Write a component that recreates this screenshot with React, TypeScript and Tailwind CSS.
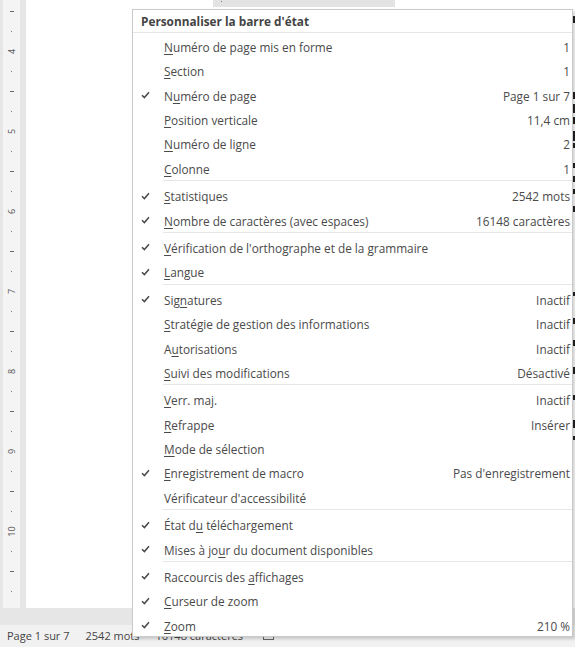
import React from "react";

type Item = {
  label: [string, string, string];
  value?: string;
  checked?: boolean;
  sepAfter?: boolean;
};

const items: Item[] = [
  { label: ["", "N", "uméro de page mis en forme"], value: "1" },
  { label: ["", "S", "ection"], value: "1" },
  { label: ["N", "u", "méro de page"], value: "Page 1 sur 7", checked: true },
  { label: ["", "P", "osition verticale"], value: "11,4 cm" },
  { label: ["", "N", "uméro de ligne"], value: "2" },
  { label: ["", "C", "olonne"], value: "1", sepAfter: true },
  { label: ["", "S", "tatistiques"], value: "2542 mots", checked: true },
  { label: ["", "N", "ombre de caractères (avec espaces)"], value: "16148 caractères", checked: true, sepAfter: true },
  { label: ["", "V", "érification de l'orthographe et de la grammaire"], checked: true },
  { label: ["", "L", "angue"], checked: true, sepAfter: true },
  { label: ["Sig", "n", "atures"], value: "Inactif", checked: true },
  { label: ["", "S", "tratégie de gestion des informations"], value: "Inactif" },
  { label: ["A", "u", "torisations"], value: "Inactif" },
  { label: ["", "S", "uivi des modifications"], value: "Désactivé", sepAfter: true },
  { label: ["", "V", "err. maj."], value: "Inactif" },
  { label: ["", "R", "efrappe"], value: "Insérer" },
  { label: ["", "M", "ode de sélection"] },
  { label: ["", "E", "nregistrement de macro"], value: "Pas d'enregistrement", checked: true },
  { label: ["Vérificateur d'accessibilité", "", ""], sepAfter: true },
  { label: ["État d", "u", " téléchargement"], checked: true },
  { label: ["Mises à jo", "u", "r du document disponibles"], checked: true, sepAfter: true },
  { label: ["Raccourcis des ", "a", "ffichages"], checked: true },
  { label: ["", "C", "urseur de zoom"], checked: true },
  { label: ["", "Z", "oom"], value: "210 %", checked: true },
];

const ruler: string[] = [];
["4", "5", "6", "7", "8", "9", "10"].forEach((n) => {
  ruler.push("-", ".", n, ".");
});
ruler.push("-", ".");

// bits of the document text peeking out on the right of the menu
const marks = [
  { top: 16, h: 7 },
  { top: 92, h: 7 },
  { top: 104, h: 9 },
  { top: 117, h: 7 },
  { top: 131, h: 10 },
  { top: 143, h: 5 },
  { top: 163, h: 5 },
  { top: 176, h: 6 },
  { top: 189, h: 5 },
  { top: 206, h: 6 },
  { top: 292, h: 4 },
  { top: 318, h: 6 },
  { top: 340, h: 6 },
  { top: 367, h: 7 },
  { top: 395, h: 5 },
  { top: 420, h: 8 },
  { top: 436, h: 4 },
];

function Check() {
  return (
    <svg width="9" height="8" viewBox="0 0 9 8" fill="none">
      <path d="M1 4.2 L3.4 6.6 L8 1.2" stroke="#4a4a4a" strokeWidth="1.5" />
    </svg>
  );
}

export default function App() {
  return (
    <div
      className="relative w-[575px] h-[647px] overflow-hidden bg-[#e6e6e6] text-[#444]"
      style={{ fontFamily: '"Open Sans", "Noto Sans", sans-serif' }}
    >
      <div className="flex h-[608px]">
        <div className="w-[3px]" />
        <div className="w-[17px] bg-[#f4f4f4] flex flex-col pt-px">
          {ruler.map((r, i) => (
            <div key={i} className="h-5 flex items-center justify-center">
              {r === "-" ? (
                <div className="w-[4px] h-px bg-[#666]" />
              ) : r === "." ? (
                <div className="w-px h-px bg-[#777]" />
              ) : (
                <span className="-rotate-90 text-[9px] leading-none text-[#555]">{r}</span>
              )}
            </div>
          ))}
        </div>
        <div className="w-[6px]" />
        <div className="flex-1 bg-white relative">
          <div className="absolute left-[187px] top-0 w-[182px] h-[7px] bg-[#e3e3e3]">
            <div className="ml-[8px] mt-[1px] w-px h-px bg-[#777]" />
          </div>
          {marks.map((m, i) => (
            <div
              key={i}
              className="absolute left-[547px] w-[2px] bg-[#222]"
              style={{ top: m.top, height: m.h }}
            />
          ))}
        </div>
      </div>
      <div className="h-[17px]" />
      <div className="h-[22px] bg-[#f1f1f1] flex items-center text-[11px] text-[#444] pl-[7px]">
        <span>Page 1 sur 7</span>
        <span className="ml-[16px]">2542 mots</span>
        <span className="ml-[16px]">16148 caractères</span>
        <span className="ml-[20px] w-[11px] h-[8px] border border-[#666]" />
      </div>

      <div className="absolute left-[132px] top-[9px] w-[441px] bg-white border border-[#cacaca] shadow-[2px_2px_3px_rgba(0,0,0,0.18)] text-[11.8px] text-[#4a4a4a]">
        <div className="h-[23px] flex items-center pt-[2px] pl-[8px] font-bold text-[#444] border-b border-[#e6e6e6]">
          Personnaliser la barre d'état
        </div>
        {items.map((it, i) => (
          <React.Fragment key={i}>
            <div className="h-[24.4px] flex items-center pt-[5px] whitespace-nowrap">
              <div className="w-[31px] pl-[8px] -mt-[3px] flex items-center">{it.checked && <Check />}</div>
              <div className="flex-1">
                {it.label[0]}
                {it.label[1] && <span className="underline underline-offset-2">{it.label[1]}</span>}
                {it.label[2]}
              </div>
              {it.value && <div className="pr-[2px]">{it.value}</div>}
            </div>
            {it.sepAfter && <div className="ml-[30px] h-px my-px bg-[#e6e6e6]" />}
          </React.Fragment>
        ))}
      </div>
    </div>
  );
}
